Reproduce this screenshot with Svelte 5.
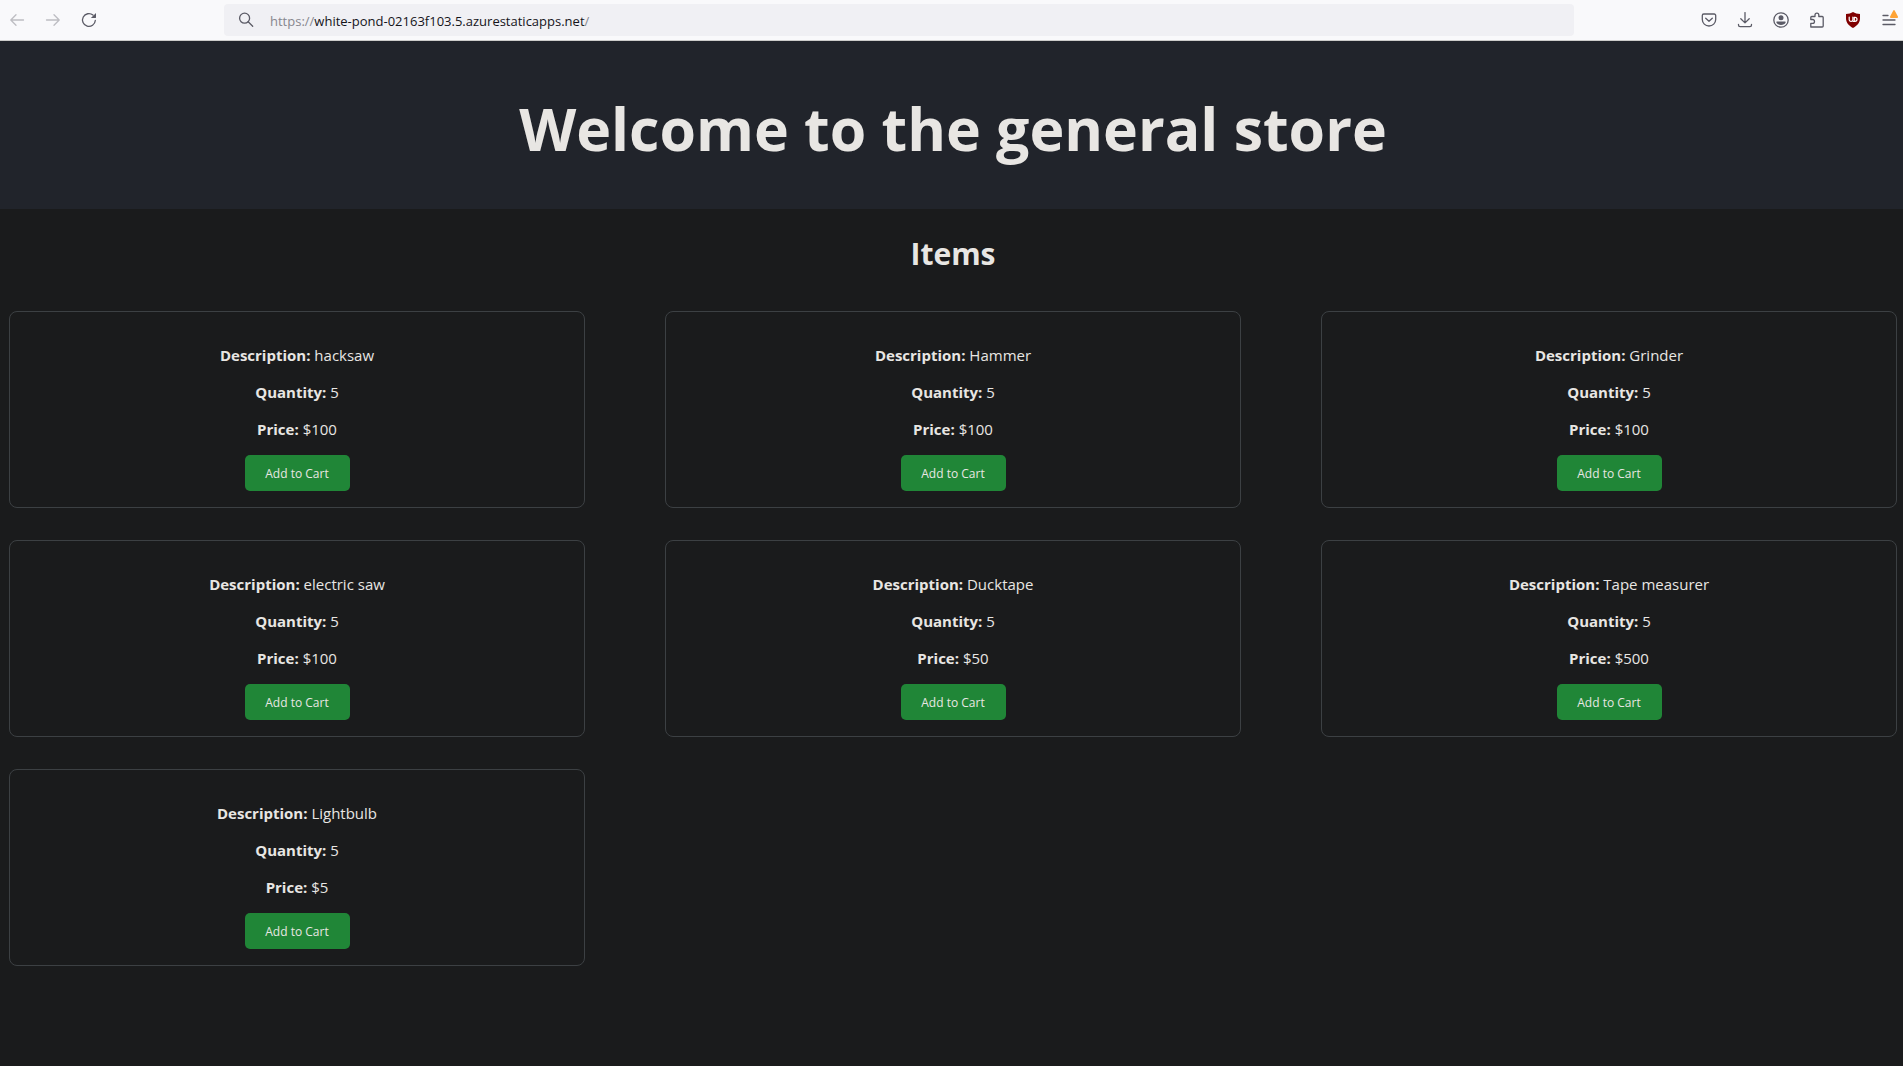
<script>
  const items = [
    { description: 'hacksaw', quantity: 5, price: 100 },
    { description: 'Hammer', quantity: 5, price: 100 },
    { description: 'Grinder', quantity: 5, price: 100 },
    { description: 'electric saw', quantity: 5, price: 100 },
    { description: 'Ducktape', quantity: 5, price: 50 },
    { description: 'Tape measurer', quantity: 5, price: 500 },
    { description: 'Lightbulb', quantity: 5, price: 5 },
  ];
</script>

<div class="window">
  <nav class="toolbar" aria-label="Browser toolbar">
    <div class="group nav-group">
      <button class="tool faded" aria-label="Back">
        <svg viewBox="0 0 16 16"><path d="M14.500 8H2M7 2.800 1.800 8 7 13.200" /></svg>
      </button>
      <button class="tool faded" aria-label="Forward">
        <svg viewBox="0 0 16 16"><path d="M1.500 8H14M9 2.800 14.200 8 9 13.200" /></svg>
      </button>
      <button class="tool" aria-label="Reload">
        <svg viewBox="0 0 16 16"><path d="M14.300 8.500A6.400 6.400 0 1 1 12 3.100" /><path class="solid" d="M15 .9v4.700a.4.4 0 0 1-.4.4H9.900z" /></svg>
      </button>
    </div>
    <button class="address" aria-label="Address: https://white-pond-02163f103.5.azurestaticapps.net/">
      <svg viewBox="0 0 16 16"><circle cx="6.600" cy="6.200" r="5" /><path d="m10.200 9.800 4.500 4.500" /></svg>
      <span class="url">https://<span class="host">white-pond-02163f103.5.azurestaticapps.net</span>/</span>
    </button>
    <div class="group tools-group">
      <button class="tool" aria-label="Save to Pocket">
        <svg viewBox="0 0 16 16"><path d="M2.800 2h10.400a1.500 1.500 0 0 1 1.500 1.500V7.600a6.700 6.400 0 0 1-13.400 0V3.500A1.500 1.500 0 0 1 2.800 2zM4.700 6.200 8 9.200l3.300-3" /></svg>
      </button>
      <button class="tool" aria-label="Downloads">
        <svg viewBox="0 0 16 16"><path d="M8 .6v10.200M3.800 6.700 8 10.900l4.200-4.200M1.500 12.400v.6a1.600 1.600 0 0 0 1.600 1.600h9.800a1.600 1.600 0 0 0 1.600-1.600v-.6" /></svg>
      </button>
      <button class="tool" aria-label="Account">
        <svg viewBox="0 0 16 16"><circle cx="8" cy="8" r="7.200" /><circle class="solid" cx="8" cy="5.800" r="2.500" /><path class="solid" d="M4 9.500h8a.7.7 0 0 1 .7.8C12.100 12 10.200 13 8 13s-4.100-1-4.700-2.700a.7.7 0 0 1 .7-.8z" /></svg>
      </button>
      <button class="tool" aria-label="Extensions">
        <svg viewBox="0 0 16 16"><path d="M1.800 15V11.300h1.800a1.900 1.900 0 0 0 0-3.800H1.800V5.500a1 1 0 0 1 1-1H6V3a1.900 1.900 0 0 1 3.800 0v1.500h3.400a1 1 0 0 1 1 1V14a1 1 0 0 1-1 1z" /></svg>
      </button>
      <button class="tool" aria-label="uBlock Origin">
        <svg viewBox="0 0 16 16"><path class="shield" d="M8 0c2 1.300 4.300 1.900 7 2v4.500c0 4.500-3.400 7.500-7 9.500-3.600-2-7-5-7-9.500V2c2.700-.1 5-.7 7-2z" /><path class="mark" d="M4.200 5.200v2.600q0 1.500 1.600 1.500h.6q1.500 0 1.500-1.500V5.200M8 9.300h2q2 0 2-2t-2-2H9.300v3" /></svg>
      </button>
      <button class="tool" aria-label="Open application menu">
        <svg viewBox="0 0 16 16"><path d="M2 3.500h5M2 8h12M2 12.500h12" /></svg>
        <svg class="alert" viewBox="0 0 8 8"><path d="M4 0a.8.8 0 0 1 .7.4l3.200 6.200A1 1 0 0 1 7 8H1a1 1 0 0 1-.9-1.400L3.300.4A.8.8 0 0 1 4 0z" /></svg>
      </button>
    </div>
  </nav>

  <header class="banner">
    <h1>Welcome to the general store</h1>
  </header>

  <main>
    <h2>Items</h2>
    <ul class="grid">
      {#each items as item}
        <li class="card">
          <p><strong>Description:</strong> {item.description}</p>
          <p><strong>Quantity:</strong> {item.quantity}</p>
          <p><strong>Price:</strong> ${item.price}</p>
          <button class="add">Add to Cart</button>
        </li>
      {/each}
    </ul>
  </main>
</div>

<style>
  :global(body) {
    margin: 0;
    background: #1a1b1c;
  }

  .window {
    display: flex;
    flex-direction: column;
    min-height: 100vh;
    background: #1a1b1c;
    color: #e8e6e3;
    font-family: 'Segoe UI', 'Open Sans', 'Noto Sans', sans-serif;
    font-size: 15px;
    line-height: 23px;
  }

  button {
    border: 0;
    font-family: inherit;
    cursor: pointer;
  }

  .toolbar {
    display: flex;
    align-items: center;
    height: 40px;
    border-bottom: 1px solid #ccccca;
    background: #f9f9fb;
  }

  .group {
    display: flex;
    align-items: center;
    gap: 8px;
  }

  .nav-group {
    box-sizing: border-box;
    width: 224px;
    padding-left: 3px;
  }

  .tools-group {
    flex: none;
    margin-left: auto;
  }

  .tool {
    position: relative;
    display: grid;
    place-items: center;
    width: 28px;
    height: 28px;
    padding: 0;
    background: none;
    color: #5b5b66;
  }

  .faded {
    color: #bdbdc2;
  }

  svg {
    width: 16px;
    height: 16px;
    fill: none;
    stroke: currentColor;
    stroke-width: 1.3;
    stroke-linecap: round;
    stroke-linejoin: round;
  }

  .solid {
    fill: currentColor;
    stroke: none;
  }

  .shield {
    fill: #800000;
    stroke: none;
  }

  .mark {
    stroke: #ffffff;
    stroke-width: 1.2;
  }

  .alert {
    position: absolute;
    top: 4px;
    right: 5px;
    width: 8px;
    height: 8px;
    fill: #ffa436;
    stroke: none;
  }

  .address {
    display: flex;
    align-items: center;
    gap: 16px;
    flex: 0 1 1350px;
    height: 32px;
    padding: 0 14px;
    border-radius: 4px;
    background: #f0f0f4;
    color: #5b5b66;
    text-align: left;
    cursor: text;
  }

  .url {
    padding-top: 2px;
    color: #87878e;
    font-size: 13px;
    line-height: 20px;
  }

  .host {
    color: #15141a;
  }

  .banner {
    padding: 48px 6px 42px 9px;
    background: #21242b;
    text-align: center;
  }

  h1 {
    margin: 0;
    font-size: 59px;
    line-height: 78px;
  }

  main {
    padding: 24px 6px 32px 9px;
  }

  h2 {
    margin: 0 0 36px;
    font-size: 30px;
    line-height: 42px;
    text-align: center;
  }

  .grid {
    display: grid;
    grid-template-columns: repeat(3, 1fr);
    gap: 32px 80px;
    margin: 0;
    padding: 0;
    list-style: none;
  }

  .card {
    display: flex;
    flex-direction: column;
    align-items: center;
    gap: 14px;
    padding: 32px 16px 16px;
    border: 1px solid #3c4043;
    border-radius: 8px;
    text-align: center;
  }

  p {
    margin: 0;
  }

  .add {
    min-width: 105px;
    height: 36px;
    padding: 0 20px;
    border-radius: 5px;
    background: #208637;
    color: #e8e6e3;
    font-size: 12px;
  }
</style>
